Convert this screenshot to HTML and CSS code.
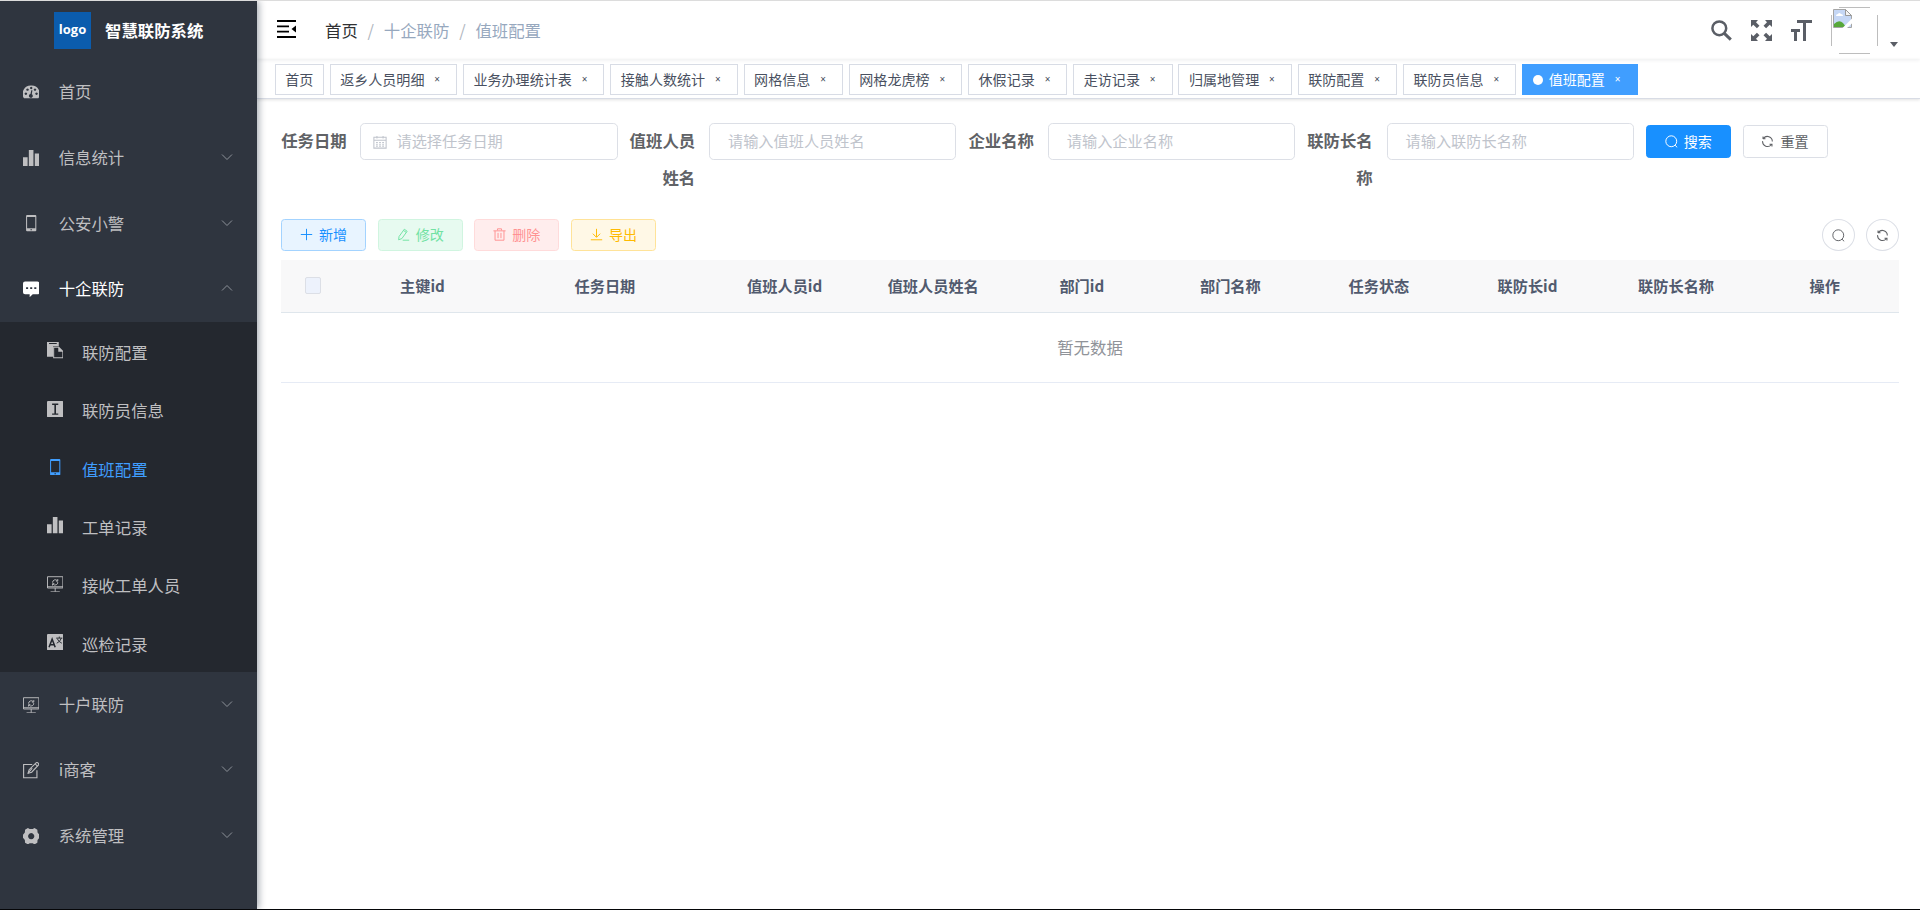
FILE: index.html
```
<!DOCTYPE html>
<html lang="zh-CN">
<head>
<meta charset="utf-8">
<title>智慧联防系统</title>
<link rel="stylesheet" href="styles.css">
</head>
<body>
<svg class="sprite" xmlns="http://www.w3.org/2000/svg">
	<symbol id="i-dashboard" viewBox="0 0 16 16"><path fill-rule="evenodd" d="M8 1.500A8 8 0 0 0 1 14h14A8 8 0 0 0 8 1.500zM2.800 8.300a1.200 1.200 0 1 0 .01 0zM4.400 4.300a1.200 1.200 0 1 0 .01 0zM8 2.700a1.200 1.200 0 1 0 .01 0zM13.200 8.300a1.200 1.200 0 1 0 .01 0zM11.700 4.300a1.200 1.200 0 1 0 .01 0zM9.200 6.200l-.6 3.800a1.900 1.900 0 1 1-1.300-.2l.8-3.800z"/></symbol>
	<symbol id="i-chart" viewBox="0 0 16 16"><path d="M0 7h4.500v9H0zM5.700 0h4.500v16H5.700zM11.500 3.500H16V16h-4.500z"/></symbol>
	<symbol id="i-phone" viewBox="0 0 16 16"><path fill-rule="evenodd" d="M4 0h8q1 0 1 1v14q0 1-1 1H4q-1 0-1-1V1q0-1 1-1zM4 2v11h8V2zM7.300 14v1h1.400v-1z"/></symbol>
	<symbol id="i-message" viewBox="0 0 16 16"><path fill-rule="evenodd" d="M2 .5h12q2 0 2 2v8.500q0 2-2 2H9.500L6.500 15.800V13H2q-2 0-2-2V2.500q0-2 2-2zM3 6v1.800h2V6zM7 6v1.800h2V6zM11 6v1.800h2V6z"/></symbol>
	<symbol id="i-docs" viewBox="0 0 16 16"><path fill-rule="evenodd" d="M0 0h11.500v4H6v10.500H0zM2 1v1h7.500V1z"/><path fill-rule="evenodd" d="M6 4.500h5.500L16 9v7H6zM7 5.500V15h8V9.500h-4v-4z"/></symbol>
	<symbol id="i-input" viewBox="0 0 16 16"><path fill-rule="evenodd" d="M1 0h14q1 0 1 1v14q0 1-1 1H1q-1 0-1-1V1q0-1 1-1zM5 2.500v1.300h2.200v8.400H5v1.300h6v-1.300H8.800V3.800H11V2.500z"/></symbol>
	<symbol id="i-monitor" viewBox="0 0 16 16"><g fill="none" stroke="currentColor"><path d="M.5.700h15v11H.5zM8 11.700v3.600M3.500 15.500h9M0 10.500h16" stroke-width=".9"/><path d="M5.500 6.500a2.600 2.600 0 0 1 4.500-2M10.500 6a2.600 2.600 0 0 1-4.500 2M10.500 3v2H8.700M5.400 9.300V7.500h1.800" stroke-width=".9"/></g></symbol>
	<symbol id="i-lang" viewBox="0 0 16 16"><path d="M1 0h14q1 0 1 1v14q0 1-1 1H1q-1 0-1-1V1q0-1 1-1z"/><path d="M2 13L5 5l3 8M3 10.500h4" stroke="#24282f" stroke-width="1.500" fill="none"/><path d="M9 4h6M12 2.500V4M14 4q-1 3.500-4.500 5M10 4.500q1 3 4.500 4.500" stroke="#24282f" fill="none" stroke-width=".9"/></symbol>
	<symbol id="i-edit" viewBox="0 0 16 16"><g fill="none" stroke="currentColor"><path d="M9 2.500H.6v13h13V8M5 11l1-3.500L13 .7q.8-.5 1.800.4t.4 1.800L8.500 10z" stroke-width="1.100"/><path d="M12 2l2.200 2M5 11l4-5"/></g></symbol>
	<symbol id="i-gear" viewBox="0 0 16 16"><path fill-rule="evenodd" d="M4.800 0l1.700 1h3l1.700-1L14 1.700l.2 2.600L16 6.500v3l-1.800 2.200-.2 2.600L11.200 16l-1.700-1h-3l-1.700 1L2 14.300l-.2-2.600L0 9.500v-3l1.800-2.200L2 1.700zM8 5a3 3 0 1 0 .01 0z"/></symbol>
	<symbol id="i-arrow" viewBox="0 0 12 12"><path d="M1 3.500l5 5 5-5" fill="none" stroke="currentColor"/></symbol>
	<symbol id="i-search" viewBox="0 0 16 16"><circle cx="7.700" cy="7.700" r="6.700" fill="none" stroke="currentColor" stroke-width="1.200"/><path d="M12.300 12.500l2.700 2.700" stroke="currentColor" stroke-width="1.200"/></symbol>
	<symbol id="i-refresh" viewBox="0 0 16 16"><path d="M2.500 4.800V1.800M2.500 4.500h3M3 4.300A6 6 0 0 1 13.900 8M2 7.500a6 6 0 0 0 10.800 4.200M13.500 14.200v-2.800h-3" fill="none" stroke="currentColor" stroke-width="1.300"/></symbol>
	<symbol id="i-calendar" viewBox="0 0 16 16"><path d="M1 2.500h14v12.500H1zM1 6h14M4.500 1v3M11.500 1v3M3.500 8.500h2M7 8.500h2M10.500 8.500h2M3.500 10.500h2M7 10.500h2M10.500 10.500h2M3.500 12.700h2M7 12.700h2M10.500 12.700h2" fill="none" stroke="currentColor" stroke-width="1.200"/></symbol>
</svg>

<div class="app-wrapper">
	<div class="sidebar">
		<div class="sidebar-logo"><span class="logo">logo</span><h1>智慧联防系统</h1></div>
		<ul class="menu">
			<li><svg><use href="#i-dashboard"/></svg><span>首页</span></li>
			<li><svg><use href="#i-chart"/></svg><span>信息统计</span><svg class="arrow"><use href="#i-arrow"/></svg></li>
			<li><svg><use href="#i-phone"/></svg><span>公安小警</span><svg class="arrow"><use href="#i-arrow"/></svg></li>
			<li class="opened"><svg><use href="#i-message"/></svg><span>十企联防</span><svg class="arrow"><use href="#i-arrow"/></svg></li>
		</ul>
		<ul class="menu submenu">
			<li><svg><use href="#i-docs"/></svg><span>联防配置</span></li>
			<li><svg><use href="#i-input"/></svg><span>联防员信息</span></li>
			<li class="active"><svg><use href="#i-phone"/></svg><span>值班配置</span></li>
			<li><svg><use href="#i-chart"/></svg><span>工单记录</span></li>
			<li><svg><use href="#i-monitor"/></svg><span>接收工单人员</span></li>
			<li><svg><use href="#i-lang"/></svg><span>巡检记录</span></li>
		</ul>
		<ul class="menu">
			<li><svg><use href="#i-monitor"/></svg><span>十户联防</span><svg class="arrow"><use href="#i-arrow"/></svg></li>
			<li><svg><use href="#i-edit"/></svg><span>i商客</span><svg class="arrow"><use href="#i-arrow"/></svg></li>
			<li><svg><use href="#i-gear"/></svg><span>系统管理</span><svg class="arrow"><use href="#i-arrow"/></svg></li>
		</ul>
	</div>

	<div class="main">
		<div class="navbar">
			<svg class="hamburger" viewBox="0 0 19 18"><path d="M0 1h19M0 6.300h12M0 11.700h12M0 17h19" stroke="#000" stroke-width="1.800"/><path d="M19 5.500v7L14.500 9z"/></svg>
			<div class="breadcrumb"><span class="home">首页</span><i>/</i><span>十企联防</span><i>/</i><span>值班配置</span></div>
			<div class="right-menu">
				<svg viewBox="0 0 21 21"><circle cx="8.300" cy="8.300" r="6.900" fill="none" stroke="currentColor" stroke-width="2.500"/><path d="M13.300 13.300l6.500 6.300" stroke="currentColor" stroke-width="3"/></svg>
				<svg viewBox="0 0 21 21"><path d="M0 0h7L5 2.200l3.500 3.500-2.600 2.600L2.300 4.800 0 7zM21 0v7l-2.300-2.200-3.600 3.500-2.600-2.600L16 2.200 14 0zM0 21v-7l2.300 2.200 3.600-3.500 2.600 2.600L5 18.800 7 21zM21 21h-7l2-2.200-3.500-3.500 2.600-2.600 3.600 3.500L21 14z"/></svg>
				<svg viewBox="0 0 21 21"><path d="M6 0h15v3h-6v18h-3V3H6zM0 9h9v3H6v9H3v-9H0z"/></svg>
				<svg class="avatar" viewBox="0 0 47 47">
					<path d="M8 .5h31M8 46.500h31M.5 8v31M46.500 8v31" stroke="#bdbdbd"/>
					<path d="M3 7.500V5M5 2.500h2" stroke="#ddd"/>
					<path d="M2.500 2.500h12l6 6v12h-18z" fill="#c5d7f5" stroke="#a5a5a5"/>
					<path d="M3 20v-3q5-5 9-1l3 4z" fill="#57a83a"/>
					<path d="M5 9q0-2 2-2 1-2 3 0 2 0 2 2z" fill="#fff"/>
					<path d="M14.500 2.500v6h6z" fill="#f4f4f4" stroke="#999"/>
					<path d="M21.500 11L11.500 21h4.500l5.500-5z" fill="#fff"/>
				</svg>
				<span class="caret"></span>
			</div>
		</div>
		<div class="tags-view">
			<span class="tag">首页</span>
			<span class="tag">返乡人员明细<b>×</b></span>
			<span class="tag">业务办理统计表<b>×</b></span>
			<span class="tag">接触人数统计<b>×</b></span>
			<span class="tag">网格信息<b>×</b></span>
			<span class="tag">网格龙虎榜<b>×</b></span>
			<span class="tag">休假记录<b>×</b></span>
			<span class="tag">走访记录<b>×</b></span>
			<span class="tag">归属地管理<b>×</b></span>
			<span class="tag">联防配置<b>×</b></span>
			<span class="tag">联防员信息<b>×</b></span>
			<span class="tag active">值班配置<b>×</b></span>
		</div>

		<div class="container">
			<form class="query">
				<label>任务日期</label>
				<div class="input date"><svg><use href="#i-calendar"/></svg>请选择任务日期</div>
				<label>值班人员姓名</label>
				<div class="input">请输入值班人员姓名</div>
				<label>企业名称</label>
				<div class="input">请输入企业名称</div>
				<label>联防长名称</label>
				<div class="input">请输入联防长名称</div>
				<button type="button" class="btn search"><svg><use href="#i-search"/></svg>搜索</button>
				<button type="button" class="btn"><svg><use href="#i-refresh"/></svg>重置</button>
			</form>
			<div class="toolbar">
				<button type="button" class="btn add"><svg viewBox="0 0 16 16"><path d="M8 1v14M1 8h14" stroke="currentColor" stroke-width="1.200"/></svg>新增</button>
				<button type="button" class="btn edit"><svg viewBox="0 0 16 16"><path d="M2.500 10.500L9 1.500l3.500 2.500L6 13l-4 1.500zM8 3l3.500 2.500M7 15h8" fill="none" stroke="currentColor" stroke-width="1.200"/></svg>修改</button>
				<button type="button" class="btn del"><svg viewBox="0 0 16 16"><path d="M.5 3.500h15M2.500 3.500V15h11V3.500M5.500 3V1h5v2M6.200 6v6.500M9.800 6v6.500" fill="none" stroke="currentColor" stroke-width="1.200"/></svg>删除</button>
				<button type="button" class="btn export"><svg viewBox="0 0 16 16"><path d="M8 1v10M3.500 7L8 11.500 12.500 7M1 14.500h14" fill="none" stroke="currentColor" stroke-width="1.200"/></svg>导出</button>
				<button type="button" class="circle first"><svg><use href="#i-search"/></svg></button>
				<button type="button" class="circle"><svg><use href="#i-refresh"/></svg></button>
			</div>
			<table>
				<colgroup><col class="c-check"><col class="c-id"><col class="c-date"><col><col><col><col><col><col><col><col></colgroup>
				<thead>
					<tr>
						<th><span class="checkbox"></span></th>
						<th>主键id</th>
						<th>任务日期</th>
						<th>值班人员id</th>
						<th>值班人员姓名</th>
						<th>部门id</th>
						<th>部门名称</th>
						<th>任务状态</th>
						<th>联防长id</th>
						<th>联防长名称</th>
						<th>操作</th>
					</tr>
				</thead>
				<tbody>
					<tr><td colspan="11">暂无数据</td></tr>
				</tbody>
			</table>
		</div>
	</div>
</div>
</body>
</html>
```

FILE: styles.css
```
* {
	box-sizing: border-box;
}
body {
	margin: 0;
	height: 910px;
	overflow: hidden;
	background: #fff;
	border-top: 1px solid #dcdcdc;
	border-bottom: 1px solid #050608;
	font-family: "Noto Sans CJK SC", sans-serif;
	font-size: 16.4px;
	color: #606266;
}
svg {
	fill: currentColor;
	flex: none;
}
.sprite {
	display: none;
}
.app-wrapper {
	display: flex;
	height: 908px;
}

/* sidebar */
.sidebar {
	width: 257px;
	flex: none;
	background: #2f353f;
	box-shadow: 2px 0 7px rgba(0,21,41,.35);
	z-index: 2;
}
.sidebar-logo {
	height: 58.6px;
	display: flex;
	align-items: center;
	padding-left: 54px;
}
.logo {
	width: 37px;
	height: 37px;
	background: #0b5cad;
	color: #fff;
	font: bold 13px/34px "Open Sans", sans-serif;
	text-align: center;
	margin-right: 14px;
}
h1 {
	margin: 0 0 1px;
	font-size: 16.4px;
	color: #fff;
}
.menu {
	list-style: none;
	margin: 0;
	padding: 0;
	color: #bfbfc1;
}
.menu li {
	height: 65.6px;
	display: flex;
	align-items: center;
	padding: 0 24px 0 23px;
}
.menu span {
	margin-bottom: 2px;
}
.menu svg {
	width: 16.4px;
	height: 16.4px;
	margin-right: 19.3px;
}
.menu svg.arrow {
	width: 12px;
	height: 12px;
	margin: 0 0 2px auto;
	color: #8d9299;
}
.menu .opened {
	color: #fff;
}
.menu .opened .arrow {
	transform: rotate(180deg);
}
.submenu {
	background: #24282f;
}
.submenu li {
	height: 58.33px;
	padding-left: 47px;
}
.submenu svg {
	margin-right: 18.6px;
	margin-bottom: 1px;
}
.submenu span {
	margin: 2px 0 0;
}
.submenu .active {
	color: #409eff;
}

/* header */
.main {
	flex: 1;
	min-width: 0;
}
.navbar {
	height: 58px;
	display: flex;
	align-items: center;
	padding-left: 20px;
	box-shadow: 0 1px 4px rgba(0,21,41,.08);
}
.hamburger {
	width: 19px;
	height: 18px;
	fill: #000;
	margin-bottom: 2px;
}
.breadcrumb {
	margin: 0 0 1px 29px;
	color: #97a8be;
	white-space: nowrap;
}
.breadcrumb .home {
	color: #303133;
}
.breadcrumb i {
	font-style: normal;
	margin: 0 9.8px;
	color: #b0b6c0;
}
.right-menu {
	display: flex;
	align-items: center;
	margin-left: auto;
	margin-right: 22px;
	color: #5a5e66;
}
.right-menu > svg {
	width: 21px;
	height: 21px;
	margin-right: 19px;
}
.right-menu > .avatar {
	width: 47px;
	height: 47px;
	margin-right: 0;
}
.caret {
	border: 4.5px solid transparent;
	border-top: 5px solid #5a5e66;
	border-bottom: 0;
	margin: 28px 0 0 12px;
}
.tags-view {
	height: 40px;
	display: flex;
	align-items: flex-start;
	gap: 5.86px;
	padding: 5px 0 0 17.7px;
	border-bottom: 1px solid #d8dce5;
	box-shadow: 0 1px 3px rgba(0,0,0,.12);
}
.tag {
	height: 31px;
	border: 1px solid #d8dce5;
	padding: 0 9.5px;
	font-size: 14.05px;
	line-height: 28px;
	color: #495060;
	white-space: nowrap;
	display: flex;
}
.tag b {
	width: 18.8px;
	margin-left: 3.35px;
	text-align: center;
	font: 10px/29px "Noto Sans", sans-serif;
}
.tag.active {
	background: #409eff;
	border-color: #409eff;
	color: #fff;
}
.tag.active::before {
	content: "";
	width: 10px;
	height: 10px;
	border-radius: 50%;
	background: #fff;
	margin: 10px 6px 0 0;
}

/* content */
.container {
	padding: 24px 21px 0 24px;
}
.query {
	display: flex;
	align-items: flex-start;
	height: 96px;
}
.query label {
	width: 65.7px;
	margin-right: 13.8px;
	line-height: 36.8px;
	font-weight: bold;
	text-align: right;
	position: relative;
	top: -1px;
}
.input {
	width: 247px;
	height: 37px;
	border: 1px solid #dcdfe6;
	border-radius: 4.7px;
	padding-left: 18px;
	margin-right: 12.3px;
	font-size: 15.2px;
	line-height: 33px;
	color: #c0c4cc;
	flex: none;
}
.input.date {
	width: 258px;
	padding-left: 12.5px;
	margin-right: 11.5px;
	margin-left: -.5px;
	display: flex;
}
.input svg {
	width: 14px;
	height: 14px;
	margin: 10.5px 9px 0 0;
}
.btn {
	width: 85px;
	height: 33px;
	margin: 0 11.7px 0 0;
	padding: 0 0 1px;
	display: flex;
	align-items: center;
	justify-content: center;
	gap: 6px;
	flex: none;
	border: 1px solid #dcdfe6;
	border-radius: 3.5px;
	background: #fff;
	color: #606266;
	font-family: inherit;
	font-size: 14.05px;
	line-height: 1;
}
.btn svg, .circle svg {
	width: 13px;
	height: 13px;
}
.query .btn {
	margin-top: 2px;
}
.btn.search {
	background: #1890ff;
	border-color: #1890ff;
	color: #fff;
}
.toolbar {
	display: flex;
	height: 41px;
}
.toolbar .btn {
	height: 32px;
}
.btn.add {
	color: #1890ff;
	background: #e8f4ff;
	border-color: #a3d3ff;
}
.btn.edit {
	color: #71e2a3;
	background: #e7faf0;
	border-color: #d0f5e0;
}
.btn.del {
	color: #ff9292;
	background: #ffeded;
	border-color: #ffdbdb;
}
.btn.export {
	color: #ffba00;
	background: #fff8e6;
	border-color: #ffe399;
}
.circle {
	width: 33px;
	height: 32px;
	padding: 0;
	border: 1px solid #dcdfe6;
	border-radius: 50%;
	background: #fff;
	color: #606266;
	display: flex;
	align-items: center;
	justify-content: center;
}
.circle.first {
	margin: 0 11px 0 auto;
}
table {
	width: 1618px;
	table-layout: fixed;
	border-collapse: separate;
	border-spacing: 0;
}
.c-check {
	width: 64.4px;
}
.c-id {
	width: 154px;
}
.c-date {
	width: 211px;
}
th {
	height: 53px;
	padding: 0 0 2px;
	background: #f8f8f9;
	color: #515a6e;
	font-size: 15.2px;
	border-bottom: 1px solid #dfe6ec;
}
td {
	height: 70px;
	padding: 0 0 2px;
	text-align: center;
	color: #909399;
	border-bottom: 1px solid #e6ebf5;
}
.checkbox {
	display: block;
	width: 16px;
	height: 17px;
	margin: 0 auto;
	background: #edf2fc;
	border: 1px solid #dcdfe6;
	border-radius: 2px;
}
```
